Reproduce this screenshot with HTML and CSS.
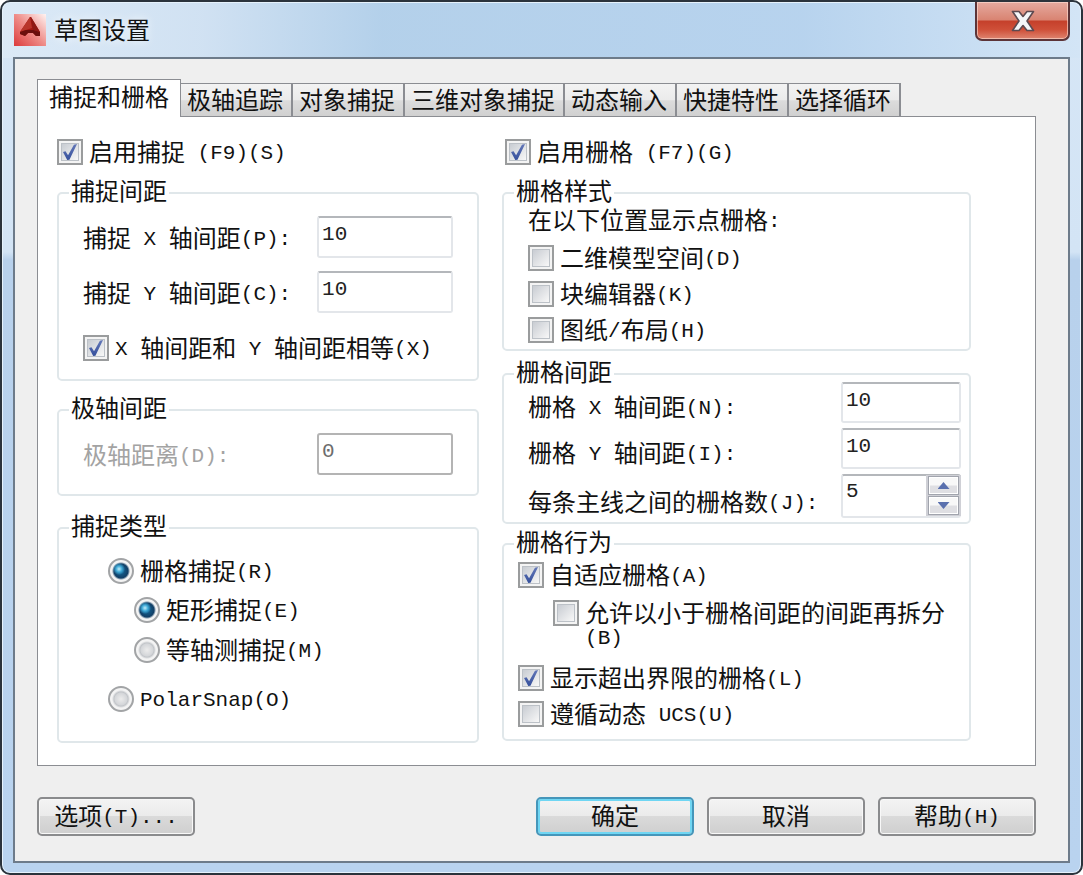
FILE: index.html
```html
<!DOCTYPE html>
<html lang="zh-CN">
<head>
    <meta charset="utf-8">
    <title>草图设置</title>
    <meta name="viewport" content="width=device-width, initial-scale=1">
    <link rel="stylesheet" href="styles.css">
</head>
<body>
    <div class="window">
        <header class="titleBar">
            <svg class="appIcon" viewBox="0 0 32 32" aria-hidden="true">
                <defs>
                    <linearGradient id="iconBack" x1="1" y1="0" x2="0" y2="1">
                        <stop offset="0" stop-color="#fff4f2"/>
                        <stop offset="0.5" stop-color="#ee8c88"/>
                        <stop offset="1" stop-color="#dc3a3c"/>
                    </linearGradient>
                </defs>
                <rect width="32" height="32" fill="url(#iconBack)"/>
                <path d="M16 3 L17 3 L26 18 L26 22 L22 22 L19 19 L14 19 L11 22 L6 20 L6 18 Z" fill="#a31712"/>
                <path d="M16 3 L18 14 L12 16 L6 18 Z" fill="#b8352b"/>
                <path d="M6 18 L12 16 L20 16 L26 18 L26 22 L22 22 L19 19 L14 19 L11 22 L6 20 Z" fill="#6b0f0d"/>
                <path d="M17 3 L26 18 L19 16 Z" fill="#8d1a15"/>
            </svg>
            <h1 class="title">草图设置</h1>
            <button class="closeButton" type="button" aria-label="关闭">
                <svg viewBox="0 0 24 22" aria-hidden="true">
                    <path d="M1.5 1.5 H8 L12 6.5 L16 1.5 H22.5 L16 11 L22.5 20.5 H16 L12 15.5 L8 20.5 H1.5 L8 11 Z" fill="#f4f6f8" stroke="#5d4a50" stroke-width="1.6" stroke-linejoin="round"/>
                </svg>
            </button>
        </header>

        <form class="client">
            <div class="tabs" role="tablist">
                <button type="button" class="tab active" role="tab" aria-selected="true">捕捉和栅格</button>
                <button type="button" class="tab" role="tab">极轴追踪</button>
                <button type="button" class="tab" role="tab">对象捕捉</button>
                <button type="button" class="tab" role="tab">三维对象捕捉</button>
                <button type="button" class="tab" role="tab">动态输入</button>
                <button type="button" class="tab" role="tab">快捷特性</button>
                <button type="button" class="tab" role="tab">选择循环</button>
            </div>

            <div class="pane" role="tabpanel">
                <div class="column snapColumn">
                    <label class="option"><input type="checkbox" checked><span>启用捕捉<span class="en"> (F9)(S)</span></span></label>

                    <fieldset class="group snapSpacing">
                        <legend>捕捉间距</legend>
                        <div class="field">
                            <label for="snapX">捕捉<span class="en"> X </span>轴间距<span class="en">(P):</span></label>
                            <input type="text" id="snapX" value="10">
                        </div>
                        <div class="field">
                            <label for="snapY">捕捉<span class="en"> Y </span>轴间距<span class="en">(C):</span></label>
                            <input type="text" id="snapY" value="10">
                        </div>
                        <label class="option"><input type="checkbox" checked><span><span class="en">X </span>轴间距和<span class="en"> Y </span>轴间距相等<span class="en">(X)</span></span></label>
                    </fieldset>

                    <fieldset class="group polarSpacing">
                        <legend>极轴间距</legend>
                        <div class="field disabled">
                            <label for="polarDistance">极轴距离<span class="en">(D):</span></label>
                            <input type="text" id="polarDistance" value="0" disabled>
                        </div>
                    </fieldset>

                    <fieldset class="group snapType">
                        <legend>捕捉类型</legend>
                        <label class="option"><input type="radio" name="snapType" checked><span>栅格捕捉<span class="en">(R)</span></span></label>
                        <div class="subOptions">
                            <label class="option"><input type="radio" name="gridSnap" checked><span>矩形捕捉<span class="en">(E)</span></span></label>
                            <label class="option"><input type="radio" name="gridSnap"><span>等轴测捕捉<span class="en">(M)</span></span></label>
                        </div>
                        <label class="option"><input type="radio" name="snapType"><span><span class="en">PolarSnap(O)</span></span></label>
                    </fieldset>
                </div>

                <div class="column gridColumn">
                    <label class="option"><input type="checkbox" checked><span>启用栅格<span class="en"> (F7)(G)</span></span></label>

                    <fieldset class="group gridStyle">
                        <legend>栅格样式</legend>
                        <p class="hint">在以下位置显示点栅格<span class="en">:</span></p>
                        <label class="option"><input type="checkbox"><span>二维模型空间<span class="en">(D)</span></span></label>
                        <label class="option"><input type="checkbox"><span>块编辑器<span class="en">(K)</span></span></label>
                        <label class="option"><input type="checkbox"><span>图纸<span class="en">/</span>布局<span class="en">(H)</span></span></label>
                    </fieldset>

                    <fieldset class="group gridSpacing">
                        <legend>栅格间距</legend>
                        <div class="field">
                            <label for="gridX">栅格<span class="en"> X </span>轴间距<span class="en">(N):</span></label>
                            <input type="text" id="gridX" value="10">
                        </div>
                        <div class="field">
                            <label for="gridY">栅格<span class="en"> Y </span>轴间距<span class="en">(I):</span></label>
                            <input type="text" id="gridY" value="10">
                        </div>
                        <div class="field">
                            <label for="majorLines">每条主线之间的栅格数<span class="en">(J):</span></label>
                            <div class="spinner">
                                <input type="number" id="majorLines" value="5" min="1">
                                <div class="spinButtons">
                                    <button type="button" class="spin up" aria-label="增加"></button>
                                    <button type="button" class="spin down" aria-label="减少"></button>
                                </div>
                            </div>
                        </div>
                    </fieldset>

                    <fieldset class="group gridBehavior">
                        <legend>栅格行为</legend>
                        <label class="option"><input type="checkbox" checked><span>自适应栅格<span class="en">(A)</span></span></label>
                        <label class="option nested"><input type="checkbox"><span>允许以小于栅格间距的间距再拆分<br><span class="en">(B)</span></span></label>
                        <label class="option"><input type="checkbox" checked><span>显示超出界限的栅格<span class="en">(L)</span></span></label>
                        <label class="option"><input type="checkbox"><span>遵循动态<span class="en"> UCS(U)</span></span></label>
                    </fieldset>
                </div>
            </div>

            <footer class="actions">
                <button type="button" class="button options">选项<span class="en">(T)...</span></button>
                <button type="submit" class="button default">确定</button>
                <button type="button" class="button">取消</button>
                <button type="button" class="button">帮助<span class="en">(H)</span></button>
            </footer>
        </form>
    </div>
</body>
</html>
```

FILE: styles.css
```css
* {
    box-sizing: border-box;
}

body {
    margin: 0;
    background-color: #ffffff;
    color: #111111;
    font-family: 'Noto Sans CJK SC', sans-serif;
    font-size: 24px;
    line-height: 24px;
}

button, input {
    font: inherit;
    color: inherit;
    margin: 0;
}

/* Latin text runs at about half the width of a Chinese character,
   no line height so it never makes the row taller */
.en {
    font-family: 'Liberation Mono', monospace;
    font-size: 21px;
    line-height: 0;
    vertical-align: 2px;
    white-space: pre;
}

/* window frame */
.window {
    display: flex;
    flex-direction: column;
    min-height: 100vh;
    padding: 0 11px 10px;
    border: 2px solid #2b333c;
    border-radius: 10px;
    background:
        linear-gradient(90deg, rgba(220, 234, 247, 0.9) 0, rgba(208, 225, 242, 0.9) 200px, rgba(176, 206, 233, 0.9) 380px, rgba(180, 209, 237, 0.9) 800px, rgba(211, 229, 246, 0.9) 100%) 0 0 / 100% 56px no-repeat,
        linear-gradient(#d6e6f6 0, #d3e4f5 250px, #b8d1ec 258px, #b9d3ef 100%);
    box-shadow: inset 0 0 0 1px #e6f2fc;
}

.titleBar {
    display: flex;
    align-items: flex-start;
    height: 55px;
}

.appIcon {
    width: 32px;
    height: 32px;
    margin: 12px 8px 0 1px;
}

.title {
    flex: 1;
    margin: 15px 0 0;
    font-size: 24px;
    font-weight: normal;
    text-shadow: 0 0 10px #ffffff;
}

.closeButton {
    display: flex;
    align-items: center;
    justify-content: center;
    width: 95px;
    height: 39px;
    padding: 0;
    border: 2px solid #5c3438;
    border-top: none;
    border-radius: 0 0 7px 7px;
    background: linear-gradient(#e5aaa0 0, #d98472 48%, #c5402b 52%, #cf5039 75%, #df8570 100%);
    box-shadow: inset 0 0 0 1px rgba(255, 225, 215, 0.6);
}

.closeButton svg {
    width: 24px;
    height: 22px;
}

.client {
    flex: 1;
    padding: 20px 32px 22px 22px;
    border: 2px solid #6d7b8a;
    background-color: #efefef;
}

/* tabs */
.tabs {
    display: flex;
    align-items: flex-end;
}

.tab {
    height: 33px;
    padding: 0 8px 3px 6px;
    border: 1px solid #8b8d92;
    border-left-width: 0;
    border-bottom: none;
    border-right-width: 2px;
    background: linear-gradient(#f3f3f3 0, #ebebeb 50%, #dcdcdc 52%, #d0d0d0 100%);
    white-space: nowrap;
}

.tab.active {
    position: relative;
    height: 38px;
    margin-bottom: -1px;
    padding: 0 11px 6px;
    border-left-width: 1px;
    border-right-width: 1px;
    background: #ffffff;
}

.pane {
    display: flex;
    gap: 23px;
    padding: 22px 64px 22px 19px;
    border: 1px solid #8b8d92;
    background-color: #ffffff;
}

.column {
    display: flex;
    flex-direction: column;
    min-width: 0;
}

.snapColumn {
    flex: 9 1 0;
}

.gridColumn {
    flex: 10 1 0;
}

.gridColumn > .option {
    margin-left: 3px;
}

/* group boxes */
.group {
    display: flex;
    flex-direction: column;
    min-width: 0;
    margin: 0;
    padding: 0 24px;
    border: 2px solid #e0e7ea;
    border-radius: 5px;
}

.group legend {
    height: 16px;
    margin-left: -14px;
    padding: 0 2px;
    line-height: 10px;
}

.snapSpacing {
    gap: 13px;
    margin-top: 20px;
    padding-top: 15px;
    padding-bottom: 18px;
}

.snapSpacing .option {
    margin-top: 9px;
}

.polarSpacing {
    margin-top: 21px;
    padding-top: 15px;
    padding-bottom: 19px;
}

.snapType {
    gap: 13px;
    margin-top: 24px;
    padding: 22px 24px 29px 49px;
}

.snapType legend {
    margin-left: -39px;
}

.subOptions {
    display: flex;
    flex-direction: column;
    gap: 14px;
    margin-bottom: 10px;
    padding-left: 26px;
}

.gridStyle {
    gap: 10px;
    margin-top: 20px;
    padding-top: 6px;
    padding-bottom: 6px;
}

.gridSpacing {
    gap: 5px;
    margin-top: 15px;
    padding-right: 8px;
    padding-bottom: 4px;
}

.gridBehavior {
    gap: 10px;
    margin-top: 12px;
    padding: 10px 14px 12px;
}

.gridBehavior legend {
    margin-left: -4px;
}

.hint {
    margin: 0 0 4px;
}

/* labelled controls */
.option {
    display: flex;
    align-items: flex-start;
    gap: 6px;
    white-space: nowrap;
}

.nested {
    margin: 2px 0 7px;
    padding-left: 35px;
}

.field {
    display: flex;
    align-items: center;
    justify-content: space-between;
}

.gridSpacing .field {
    align-items: flex-end;
}

.gridSpacing .field label {
    line-height: 34px;
}

.field label {
    white-space: nowrap;
}

.gridSpacing .field .en {
    line-height: 0;
}

.field input {
    width: 136px;
    height: 42px;
    padding: 0 4px 5px 3px;
    border: 2px solid #e3e6ea;
    border-top-color: #b4b7bb;
    border-radius: 3px;
    background-color: #ffffff;
    color: #222222;
    font-family: 'Liberation Mono', monospace;
    font-size: 21px;
}

.gridSpacing .field input {
    width: 120px;
    height: 41px;
}

.disabled label {
    color: #a3a3a3;
}

.field input:disabled {
    border-color: #b4b4b4;
    color: #6d6d6d;
}

input[type="checkbox"],
input[type="radio"] {
    flex: none;
    appearance: none;
    width: 26px;
    height: 26px;
}

input[type="checkbox"] {
    display: grid;
    place-items: center;
    border: 2px solid #9a9c9d;
    background: linear-gradient(135deg, #c9cdd3 15%, #f7f7f7 85%);
    box-shadow: inset 0 0 0 2px #f4f4f4, inset 0 0 0 3px #bcc1c7;
}

input[type="checkbox"]:checked::before {
    content: "";
    width: 14px;
    height: 16px;
    background: linear-gradient(#6478b8, #35509c);
    clip-path: polygon(0 50%, 18% 46%, 36% 70%, 78% 4%, 100% 0, 46% 98%, 30% 100%);
}

input[type="radio"] {
    border: 2px solid #a2a4a6;
    border-radius: 50%;
    background: radial-gradient(circle, #ececec 0, #d4d6d9 6px, #c2c5c9 7px, #f4f4f4 9px);
}

input[type="radio"]:checked {
    background: radial-gradient(circle at 9px 9px, #c4eefa 0, #3fa9d6 3px, transparent 6px),
        radial-gradient(circle, #14699b 0, #123f66 7px, #f4f4f4 9px);
}

.spinner {
    position: relative;
}

.gridSpacing .spinner input {
    display: block;
    height: 44px;
    padding: 0 36px 9px 3px;
    appearance: textfield;
}

.spinner input::-webkit-inner-spin-button {
    appearance: none;
    margin: 0;
}

/* sits over the right end of the number box */
.spinButtons {
    position: absolute;
    top: 1px;
    right: 0;
    display: flex;
    flex-direction: column;
    gap: 1px;
    padding: 1px 2px;
    background-color: #cfd0d6;
}

.spin {
    display: grid;
    place-items: center;
    width: 31px;
    height: 19px;
    padding: 0;
    border: 1px solid #a1a4ad;
    background: linear-gradient(#f8f8f8 45%, #dfdfe3 55%);
    box-shadow: inset 0 0 0 1px #ffffff;
}

.spin::before {
    content: "";
    width: 12px;
    height: 7px;
    background-color: #5a70ae;
    clip-path: polygon(50% 0, 100% 100%, 0 100%);
}

.spin.down::before {
    clip-path: polygon(0 0, 100% 0, 50% 100%);
}

/* bottom buttons */
.actions {
    display: flex;
    gap: 13px;
    margin-top: 31px;
}

.button {
    width: 158px;
    height: 39px;
    padding: 0 0 3px;
    border: 2px solid #8a8b8d;
    border-radius: 5px;
    background: linear-gradient(#f3f3f3 0, #ebebeb 48%, #dadada 50%, #cfcfcf 100%);
    box-shadow: inset 0 0 0 1px #f8f8f8;
}

.options {
    margin-right: auto;
}

.default {
    border-color: #4596ba;
    box-shadow: inset 0 0 0 2px #6fd6f3;
}
```
